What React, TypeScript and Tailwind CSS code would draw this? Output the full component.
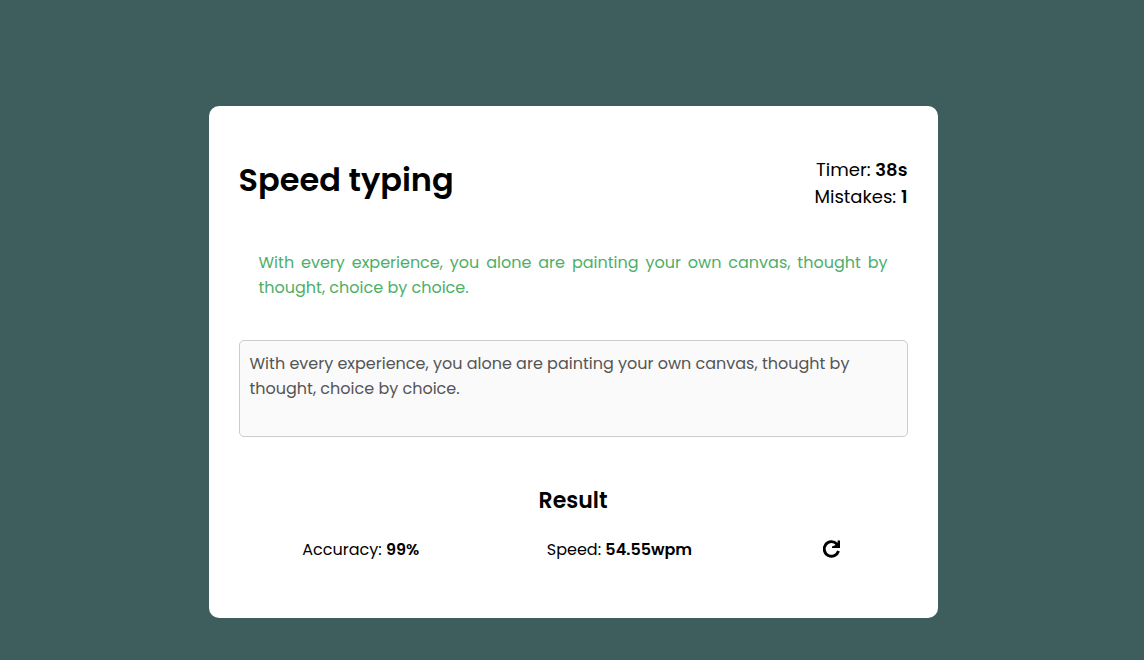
const SENTENCE =
  "With every experience, you alone are painting your own canvas, thought by thought, choice by choice.";

function RefreshIcon() {
  return (
    <svg viewBox="0 0 24 24" className="size-6" fill="currentColor" aria-hidden="true">
      <path
        d="M18.5 14A7.3 7.3 0 1 1 16.8 6.9"
        fill="none"
        stroke="currentColor"
        strokeWidth="2.9"
      />
      <path d="M20 3.5V11H12V9.4L14.6 8.6L17.6 5.4V3.5z" />
    </svg>
  );
}

export default function App() {
  return (
    <main className="flex min-h-screen items-start justify-center bg-[#3d5e5c] pt-[106px] pb-10 pl-0.5 font-[Poppins,Inter,sans-serif] text-black">
      <section className="w-full max-w-[729px] rounded-[10px] bg-white px-[30px] pt-[50px] pb-14">
        <header className="flex items-start justify-between">
          <h1 className="text-[32px] leading-12 font-semibold">Speed typing</h1>
          <div className="text-right text-lg leading-[27px]">
            <p>Timer: <b className="font-semibold">38s</b></p>
            <p>Mistakes: <b className="font-semibold">1</b></p>
          </div>
        </header>

        <p className="mt-10 px-5 text-justify text-base leading-[25px] text-[#4caf6a]">{SENTENCE}</p>

        <textarea
          aria-label="Type the sentence"
          defaultValue={SENTENCE}
          className="mt-10 block h-[97px] w-full resize-none rounded-[5px] border border-[#cccccc] bg-[#fafafa] p-2.5 text-base leading-[25px] text-[#555555] outline-none"
        />

        <h2 className="mt-[47px] text-center text-[22px] leading-[33px] font-semibold">Result</h2>
        <div className="mt-5 flex items-start justify-around text-base leading-[25px]">
          <p>Accuracy: <b className="font-semibold">99%</b></p>
          <p>Speed: <b className="font-semibold">54.55wpm</b></p>
          <button type="button" aria-label="Restart" className="cursor-pointer">
            <RefreshIcon />
          </button>
        </div>
      </section>
    </main>
  );
}
